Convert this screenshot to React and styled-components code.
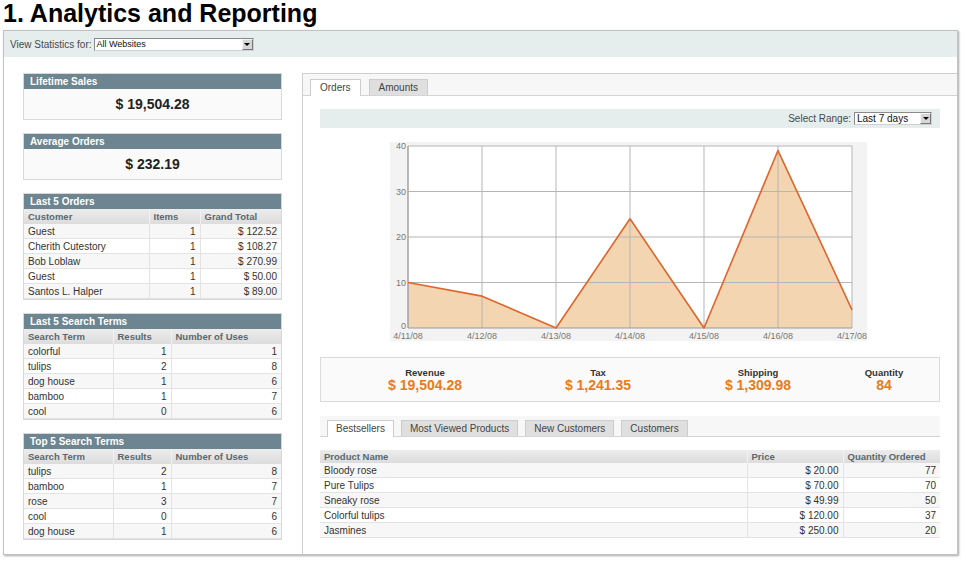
import styled, { createGlobalStyle } from "styled-components";

const GlobalStyle = createGlobalStyle`
  body {
    margin: 0;
    background: #fff;
    font-family: "Liberation Sans", Arial, sans-serif;
    color: #333;
  }
`;

const Page = styled.div`
  width: 966px;
  height: 562px;
  padding-left: 3px;
  box-sizing: border-box;
  overflow: hidden;
`;

const Title = styled.h1`
  margin: 0;
  font-size: 25px;
  line-height: 26px;
  font-weight: bold;
  color: #000;
`;

const Panel = styled.div`
  margin-top: 4px;
  width: 955px;
  height: 525px;
  box-sizing: border-box;
  border: 1px solid #c2c2c2;
  box-shadow: 1px 1px 2px rgba(0, 0, 0, 0.35);
  display: flex;
  flex-direction: column;
`;

const HeaderBar = styled.div`
  height: 26px;
  flex: none;
  background: #e6eded;
  display: flex;
  align-items: center;
  padding-left: 6px;
  gap: 2px;
`;

const Label = styled.span`
  font-size: 10px;
  color: #4a4a4a;
`;

const SelectBox = styled.div`
  width: ${(p) => p.$w}px;
  height: 13px;
  box-sizing: border-box;
  border: 1px solid #8a8a8a;
  border-right-color: #d0d0d0;
  border-bottom-color: #d0d0d0;
  background: #fff;
  display: flex;
  align-items: center;
  justify-content: space-between;
  font-size: ${(p) => p.$fs}px;
  color: #111;
  padding-left: 2px;
`;

const SelectArrow = styled.span`
  width: 11px;
  height: 11px;
  box-sizing: border-box;
  background: #d6d6d6;
  border: 1px solid #f4f4f4;
  border-right-color: #777;
  border-bottom-color: #777;
  display: flex;
  align-items: center;
  justify-content: center;
  &::after {
    content: "";
    border-left: 3px solid transparent;
    border-right: 3px solid transparent;
    border-top: 3px solid #000;
  }
`;

const Body = styled.div`
  flex: 1;
  display: flex;
  min-height: 0;
`;

const LeftCol = styled.div`
  width: 298px;
  flex: none;
  padding: 16px 0 0 19px;
  box-sizing: border-box;
  display: flex;
  flex-direction: column;
  gap: 13px;
`;

const Box = styled.div`
  width: 259px;
  box-sizing: border-box;
  border: 1px solid #d8d8d8;
`;

const BoxHead = styled.div`
  height: 15px;
  line-height: 15px;
  background: #6c8591;
  color: #fff;
  font-weight: bold;
  font-size: 10px;
  padding-left: 6px;
`;

const BigValue = styled.div`
  height: 30px;
  background: #fafafa;
  display: flex;
  align-items: center;
  justify-content: center;
  font-size: 14px;
  font-weight: bold;
  color: #222;
`;

const Table = styled.table`
  width: 100%;
  border-collapse: collapse;
  table-layout: fixed;
  font-size: 10px;
`;

const Th = styled.th`
  height: ${(p) => p.$h}px;
  padding: 0 4px;
  text-align: left;
  font-size: 9.5px;
  font-weight: bold;
  color: #5a6870;
  background: linear-gradient(#ececec, #dcdcdc);
  border-right: 1px solid #f2f2f2;
  white-space: nowrap;
  &:last-child {
    border-right: none;
  }
`;

const Tr = styled.tr`
  &:nth-child(odd) td {
    background: #f7f7f7;
  }
`;

const Td = styled.td`
  height: 14px;
  padding: 0 4px;
  text-align: ${(p) => p.$align || "left"};
  color: #333;
  border-bottom: 1px solid #e3e3e3;
  border-right: 1px solid #e3e3e3;
  white-space: nowrap;
  &:last-child {
    border-right: none;
  }
`;

const RightPanel = styled.div`
  flex: 1;
  margin-top: 16px;
  border-top: 1px solid #cfcfcf;
  border-left: 1px solid #cfcfcf;
  display: flex;
  flex-direction: column;
`;

const TabStrip = styled.div`
  height: ${(p) => p.$h}px;
  box-sizing: border-box;
  background: #f7f7f7;
  border-bottom: 1px solid #d4d4d4;
  display: flex;
  align-items: flex-end;
  gap: ${(p) => p.$gap}px;
  padding-left: 7px;
  margin-top: ${(p) => p.$mt || 0}px;
`;

const Tab = styled.div`
  box-sizing: border-box;
  line-height: 15px;
  padding: 0 ${(p) => p.$pad}px;
  font-size: 10px;
  color: #444;
  border: 1px solid #cdcdcd;
  border-bottom: none;
  background: ${(p) => (p.$active ? "#fff" : "#dfdfdf")};
  margin-bottom: ${(p) => (p.$active ? "-1px" : "0")};
  height: ${(p) => (p.$active ? 17 : 16)}px;
`;

const Content = styled.div`
  padding: 13px 17px 0 17px;
  display: flex;
  flex-direction: column;
`;

const RangeBar = styled.div`
  height: 19px;
  background: #e5eded;
  display: flex;
  align-items: center;
  justify-content: flex-end;
  padding-right: 8px;
  gap: 3px;
`;

const ChartWrap = styled.div`
  margin-top: 14px;
  display: flex;
  justify-content: center;
  padding-right: 3px;
`;

const Totals = styled.div`
  margin-top: 16px;
  height: 45px;
  box-sizing: border-box;
  border: 1px solid #dadada;
  background: #fafafa;
  display: grid;
  grid-template-columns: 208px 138px 182px 70px;
  align-content: center;
`;

const TotalCell = styled.div`
  text-align: center;
`;

const TotalLabel = styled.div`
  font-size: 9.5px;
  font-weight: bold;
  line-height: 11px;
  color: #333;
`;

const TotalValue = styled.div`
  font-size: 14px;
  font-weight: bold;
  line-height: 15px;
  color: #eb7b18;
`;

const GridWrap = styled.div`
  margin-top: 13px;
`;

const DataTable = ({ columns, rows, headH = 15 }) => (
  <Table>
    <colgroup>
      {columns.map((c) => (
        <col key={c.label} style={{ width: c.width }} />
      ))}
    </colgroup>
    <thead>
      <tr>
        {columns.map((c) => (
          <Th key={c.label} $h={headH}>
            {c.label}
          </Th>
        ))}
      </tr>
    </thead>
    <tbody>
      {rows.map((r, i) => (
        <Tr key={i}>
          {r.map((v, j) => (
            <Td key={j} $align={columns[j].align}>
              {v}
            </Td>
          ))}
        </Tr>
      ))}
    </tbody>
  </Table>
);

const orderCols = [
  { label: "Customer", width: 125 },
  { label: "Items", width: 51, align: "right" },
  { label: "Grand Total", width: 81, align: "right" },
];
const orders = [
  ["Guest", 1, "$ 122.52"],
  ["Cherith Cutestory", 1, "$ 108.27"],
  ["Bob Loblaw", 1, "$ 270.99"],
  ["Guest", 1, "$ 50.00"],
  ["Santos L. Halper", 1, "$ 89.00"],
];

const termCols = [
  { label: "Search Term", width: 89 },
  { label: "Results", width: 58, align: "right" },
  { label: "Number of Uses", width: 110, align: "right" },
];
const lastTerms = [
  ["colorful", 1, 1],
  ["tulips", 2, 8],
  ["dog house", 1, 6],
  ["bamboo", 1, 7],
  ["cool", 0, 6],
];
const topTerms = [
  ["tulips", 2, 8],
  ["bamboo", 1, 7],
  ["rose", 3, 7],
  ["cool", 0, 6],
  ["dog house", 1, 6],
];

const productCols = [
  { label: "Product Name", width: 427 },
  { label: "Price", width: 96, align: "right" },
  { label: "Quantity Ordered", width: 97, align: "right" },
];
const products = [
  ["Bloody rose", "$ 20.00", 77],
  ["Pure Tulips", "$ 70.00", 70],
  ["Sneaky rose", "$ 49.99", 50],
  ["Colorful tulips", "$ 120.00", 37],
  ["Jasmines", "$ 250.00", 20],
];

const totals = [
  ["Revenue", "$ 19,504.28"],
  ["Tax", "$ 1,241.35"],
  ["Shipping", "$ 1,309.98"],
  ["Quantity", "84"],
];

const chartData = [10, 7, 0, 24, 0, 39, 4];
const chartDates = ["4/11/08", "4/12/08", "4/13/08", "4/14/08", "4/15/08", "4/16/08", "4/17/08"];

const OrdersChart = () => {
  const x0 = 18;
  const step = 74;
  const top = 4;
  const base = 186;
  const k = (base - top) / 40;
  const pts = chartData.map((v, i) => [x0 + i * step, base - v * k]);
  const line = pts.map((p) => p.join(",")).join(" ");
  const area = `M${x0},${base} L${line} L${pts[6][0]},${base} Z`;
  return (
    <svg width="477" height="199" viewBox="0 0 477 199">
      <rect x="0" y="0" width="477" height="199" fill="#f3f3f3" />
      <rect x={x0} y={top} width={step * 6} height={base - top} fill="#fff" />
      <path d={area} fill="#f3d5b1" />
      {[10, 20, 30, 40].map((v) => (
        <line key={v} x1={x0} x2={x0 + step * 6} y1={base - v * k} y2={base - v * k} stroke="#b5b5b5" strokeWidth="1" />
      ))}
      {chartDates.map((d, i) => (
        <line key={d} x1={x0 + i * step} x2={x0 + i * step} y1={top} y2={base} stroke="#b5b5b5" strokeWidth="1" />
      ))}
      <line x1={x0} x2={x0 + step * 6} y1={base} y2={base} stroke="#9a9a9a" />
      <line x1={x0} x2={x0} y1={top} y2={base} stroke="#9a9a9a" />
      <polyline points={line} fill="none" stroke="#e0652a" strokeWidth="1.6" strokeLinejoin="round" />
      {[0, 10, 20, 30, 40].map((v) => (
        <text key={v} x={x0 - 2} y={v === 0 ? base + 1 : base - v * k + 3} fontSize="9" fill="#777" textAnchor="end" fontFamily="Liberation Sans, Arial, sans-serif">
          {v}
        </text>
      ))}
      {chartDates.map((d, i) => (
        <text key={d} x={x0 + i * step} y="197" fontSize="9" fill="#777" textAnchor="middle" fontFamily="Liberation Sans, Arial, sans-serif">
          {d}
        </text>
      ))}
    </svg>
  );
};

export default function App() {
  return (
    <Page>
      <GlobalStyle />
      <Title>1. Analytics and Reporting</Title>
      <Panel>
        <HeaderBar>
          <Label>View Statistics for:</Label>
          <SelectBox $w={160} $fs={9}>
            All Websites
            <SelectArrow />
          </SelectBox>
        </HeaderBar>
        <Body>
          <LeftCol>
            <Box>
              <BoxHead>Lifetime Sales</BoxHead>
              <BigValue>$ 19,504.28</BigValue>
            </Box>
            <Box>
              <BoxHead>Average Orders</BoxHead>
              <BigValue>$ 232.19</BigValue>
            </Box>
            <Box>
              <BoxHead>Last 5 Orders</BoxHead>
              <DataTable columns={orderCols} rows={orders} />
            </Box>
            <Box>
              <BoxHead>Last 5 Search Terms</BoxHead>
              <DataTable columns={termCols} rows={lastTerms} />
            </Box>
            <Box>
              <BoxHead>Top 5 Search Terms</BoxHead>
              <DataTable columns={termCols} rows={topTerms} />
            </Box>
          </LeftCol>
          <RightPanel>
            <TabStrip $h={22} $gap={8}>
              <Tab $active $pad={9}>Orders</Tab>
              <Tab $pad={9}>Amounts</Tab>
            </TabStrip>
            <Content>
              <RangeBar>
                <Label>Select Range:</Label>
                <SelectBox $w={78} $fs={10}>
                  Last 7 days
                  <SelectArrow />
                </SelectBox>
              </RangeBar>
              <ChartWrap>
                <OrdersChart />
              </ChartWrap>
              <Totals>
                {totals.map(([label, value]) => (
                  <TotalCell key={label}>
                    <TotalLabel>{label}</TotalLabel>
                    <TotalValue>{value}</TotalValue>
                  </TotalCell>
                ))}
              </Totals>
              <TabStrip $h={21} $gap={7} $mt={14}>
                <Tab $active $pad={8}>Bestsellers</Tab>
                <Tab $pad={8}>Most Viewed Products</Tab>
                <Tab $pad={8}>New Customers</Tab>
                <Tab $pad={8}>Customers</Tab>
              </TabStrip>
              <GridWrap>
                <DataTable columns={productCols} rows={products} headH={13} />
              </GridWrap>
            </Content>
          </RightPanel>
        </Body>
      </Panel>
    </Page>
  );
}
